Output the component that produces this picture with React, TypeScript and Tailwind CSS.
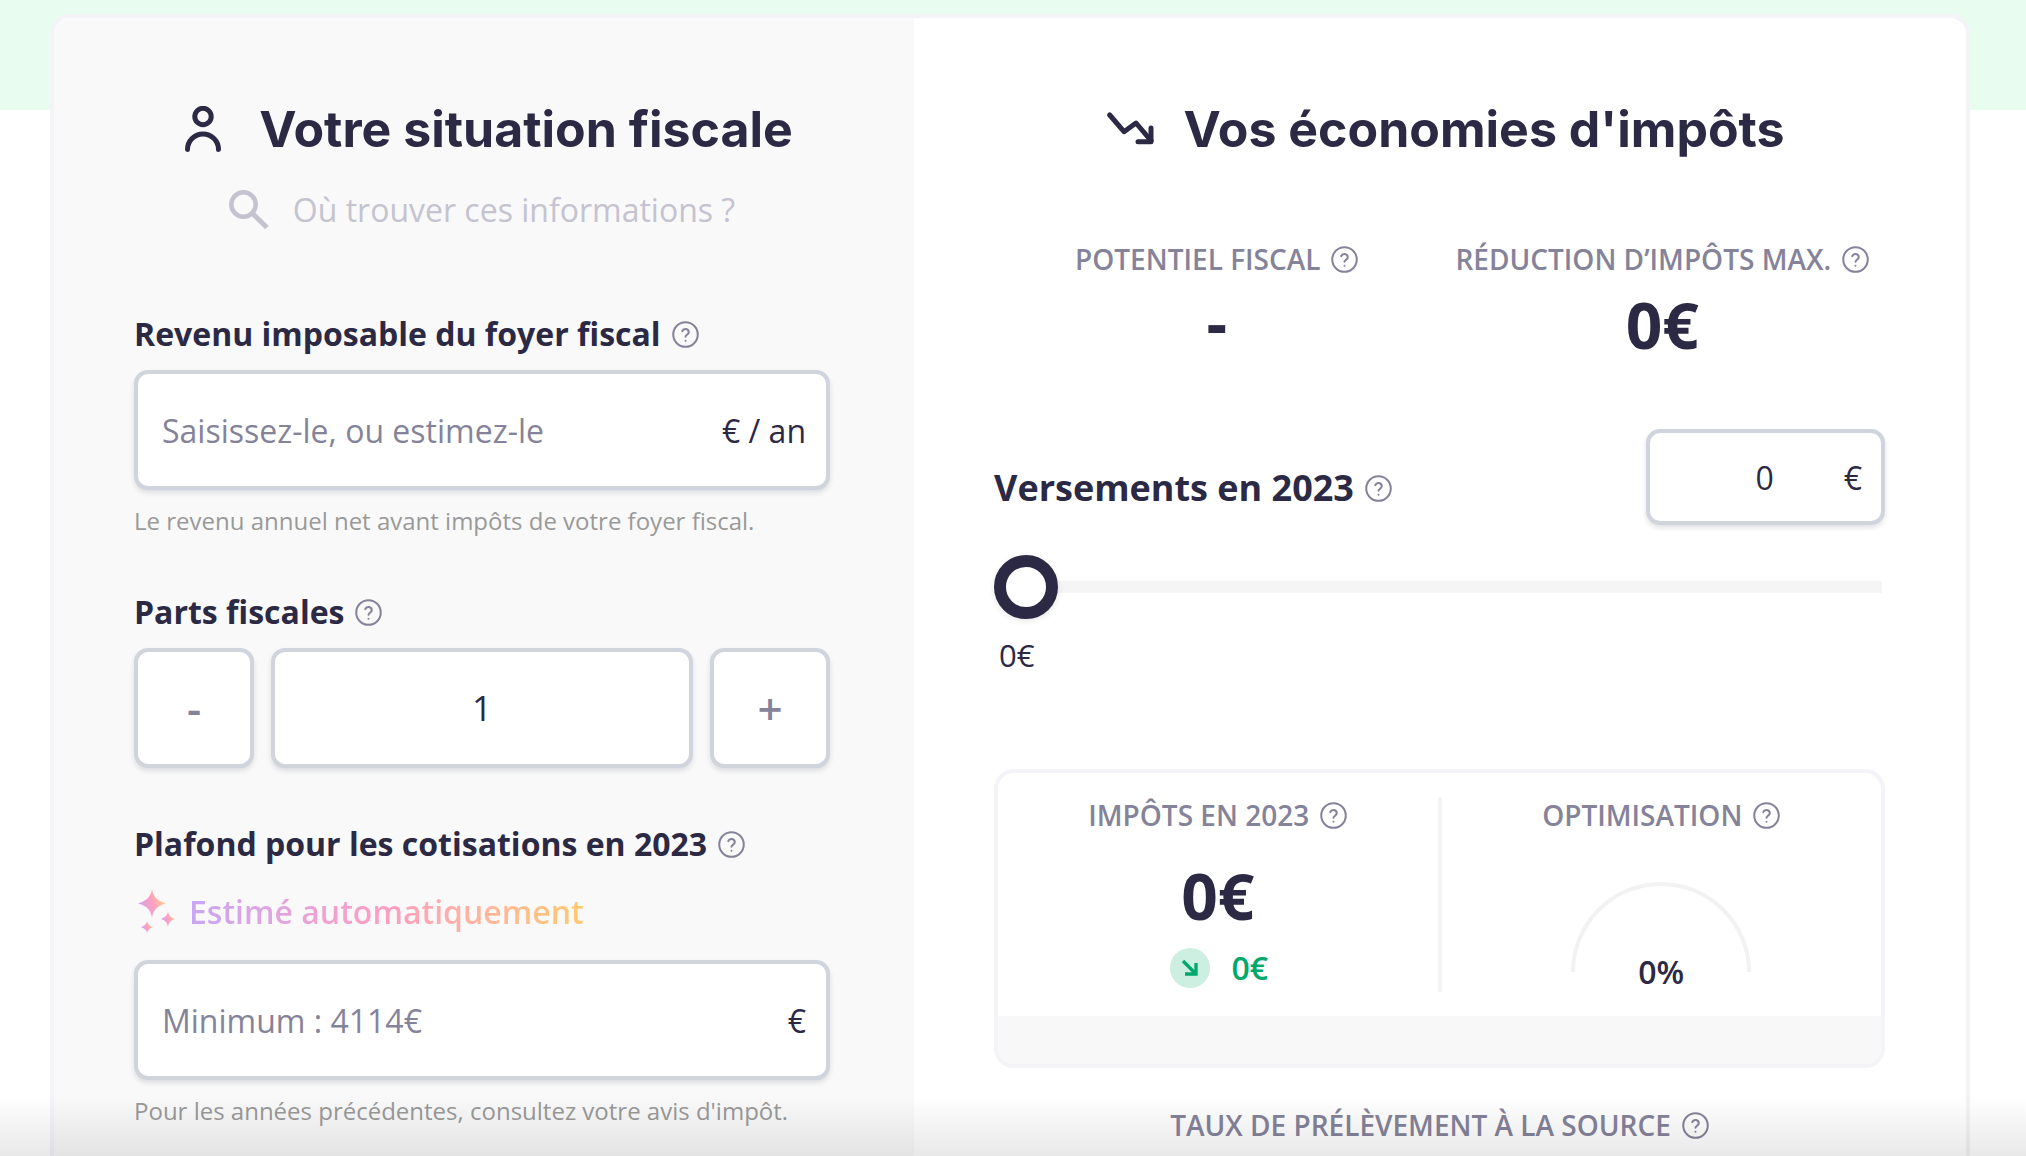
import React from 'react';

const Help = ({ className = '' }: { className?: string }) => (
  <svg viewBox="0 0 24 24" fill="none" stroke="#85839a" strokeWidth="1.8" strokeLinecap="round" strokeLinejoin="round" className={`w-[27px] h-[27px] shrink-0 ${className}`}>
    <circle cx="12" cy="12" r="10.9" />
    <path d="M9.1 9a3 3 0 0 1 5.8 1c0 2-2.9 2.4-2.9 4" />
    <path d="M12 17.6h.01" />
  </svg>
);

const Label = ({ children, className = '' }: { children: React.ReactNode; className?: string }) => (
  <div className={`flex items-center gap-[11px] leading-[42px] font-bold text-[#2c2945] ${className}`}>
    {children}
    <Help />
  </div>
);

const StatLabel = ({ children }: { children: React.ReactNode }) => (
  <div className="flex items-center justify-center gap-[11px] text-[28px] leading-[40px] font-semibold text-[#85839a]">
    {children}
    <Help />
  </div>
);

const boxClass =
  'bg-white border-4 border-[#d0d5dd] rounded-[14px] shadow-[0_3px_5px_rgba(16,24,40,0.12)]';

const App = () => {
  return (
    <div className="relative w-[2026px] h-[1156px] overflow-hidden bg-white font-['Open_Sans',sans-serif] text-[#2c2945]">
      <div className="h-[110px] bg-[#e8fdf0] absolute top-0 left-0 right-0" />

      <div className="relative ml-[50px] mt-[14px] w-[1920px] flex border-4 border-[#f3f3f8] rounded-[20px] overflow-hidden bg-white">
        {/* left panel */}
        <div className="w-[860px] shrink-0 bg-[#f9f9fa] pl-[80px] pr-[84px] pt-[85px] pb-[60px]">
          <div className="flex items-center justify-center gap-[38px] h-[52px] pl-[14px]">
            <svg viewBox="0 0 36 46" fill="none" stroke="#2c2945" strokeWidth="5" strokeLinecap="round" className="w-[36px] h-[46px] shrink-0">
              <circle cx="18" cy="10.5" r="8.2" />
              <path d="M2.5 43.5a15.5 15.5 0 0 1 31 0" />
            </svg>
            <h1 className="font-['Inter',sans-serif] text-[50px] leading-[52px] font-bold whitespace-nowrap">Votre situation fiscale</h1>
          </div>
          <div className="flex items-center justify-center gap-[24px] mt-[32px] h-[46px]">
            <svg viewBox="0 0 40 40" fill="none" stroke="#c4c3cf" strokeWidth="4.5" className="w-[40px] h-[40px] shrink-0">
              <circle cx="14.5" cy="14.5" r="12.2" />
              <path d="M23.5 23.5 38 37.5" strokeWidth="5" />
            </svg>
            <span className="text-[32px] text-[#c4c3cf] whitespace-nowrap">Où trouver ces informations ?</span>
          </div>

          <Label className="mt-[80px] text-[32px]">Revenu imposable du foyer fiscal</Label>
          <div className={`${boxClass} mt-[15px] h-[120px] flex items-center justify-between pl-[24px] pr-[20px] pt-[2px] text-[32px]`}>
            <span className="text-[#85839a]">Saisissez-le, ou estimez-le</span>
            <span>€ / an</span>
          </div>
          <p className="mt-[15px] text-[24px] leading-[32px] text-[#999999]">Le revenu annuel net avant impôts de votre foyer fiscal.</p>

          <Label className="mt-[54px] text-[32px]">Parts fiscales</Label>
          <div className="mt-[15px] flex gap-[17px] h-[120px] text-[35px]">
            <div className={`${boxClass} w-[120px] flex items-center justify-center text-[44px] text-[#85839a] font-semibold`}>-</div>
            <div className={`${boxClass} flex-1 flex items-center justify-center`}>1</div>
            <div className={`${boxClass} w-[120px] flex items-center justify-center text-[44px] text-[#85839a] font-semibold`}>+</div>
          </div>

          <Label className="mt-[55px] text-[32px]">Plafond pour les cotisations en 2023</Label>
          <div className="mt-[19px] flex items-center gap-[12px] h-[56px]">
            <svg viewBox="0 0 40 46" className="w-[40px] h-[46px] shrink-0 ml-[3px]">
              <defs>
                <linearGradient id="spark" x1="0" y1="0.6" x2="1" y2="0.3">
                  <stop offset="0" stopColor="#c9a6f5" />
                  <stop offset="0.5" stopColor="#ff9ec0" />
                  <stop offset="1" stopColor="#ffd68a" />
                </linearGradient>
              </defs>
              <path fill="url(#spark)" d="M15 0c1.200 7.500 4.800 11.500 14 14.500-9.200 2.500-12.800 6.500-14 14.500-1.200-8-4.800-12-14-14.500C10.200 11.500 13.800 7.500 15 0Z" />
              <path fill="url(#spark)" d="M31 22.500c.7 3.600 2.600 5.700 7 7.500-4.400 1.600-6.300 3.700-7 8-.7-4.300-2.600-6.400-7-8 4.400-1.800 6.300-3.900 7-7.500Z" />
              <path fill="url(#spark)" d="M10 32c.5 3 2 4.500 6 6.200-4 1.300-5.500 3-6 6.300-.5-3.300-2-5-6-6.300 4-1.700 5.500-3.200 6-6.200Z" />
            </svg>
            <span className="text-[32px] font-semibold text-transparent bg-clip-text bg-linear-to-r from-[#c9a6f5] via-[#ff9ec0] to-[#ffc96b] whitespace-nowrap">Estimé automatiquement</span>
          </div>
          <div className={`${boxClass} mt-[20px] h-[120px] flex items-center justify-between pl-[24px] pr-[20px] pt-[2px] text-[32px]`}>
            <span className="text-[#85839a]">Minimum : 4114€</span>
            <span>€</span>
          </div>
          <p className="mt-[15px] text-[24px] leading-[32px] text-[#999999]">Pour les années précédentes, consultez votre avis d'impôt.</p>
        </div>

        {/* right panel */}
        <div className="flex-1 pl-[80px] pr-[81px] pt-[85px]">
          <div className="flex items-center justify-center gap-[28px] h-[52px] pl-[13px]">
            <svg viewBox="0 0 48 34" fill="none" stroke="#2c2945" strokeWidth="5" strokeLinecap="round" strokeLinejoin="round" className="w-[48px] h-[34px] shrink-0">
              <path d="M2.700 3 17 19.700 29 11 44 28.700" />
              <path d="M44 16v13.700H31" />
            </svg>
            <h2 className="font-['Inter',sans-serif] text-[50px] leading-[52px] font-bold whitespace-nowrap">Vos économies d'impôts</h2>
          </div>

          <div className="grid grid-cols-2 mt-[84px]">
            <div className="flex flex-col items-center">
              <StatLabel>POTENTIEL FISCAL</StatLabel>
              <div className="text-[64px] leading-[88px] font-bold mt-[-1px]">-</div>
            </div>
            <div className="flex flex-col items-center">
              <StatLabel>RÉDUCTION D’IMPÔTS MAX.</StatLabel>
              <div className="text-[64px] leading-[88px] font-bold mt-[2px]">0€</div>
            </div>
          </div>

          <div className="flex items-start justify-between mt-[60px]">
            <Label className="mt-[38px] text-[36px]">Versements en 2023</Label>
            <div className={`${boxClass} w-[239px] h-[96px] flex items-center justify-end pt-[2px] pr-[19px] text-[32px]`}>
              <span className="mr-[70px]">0</span>
              <span>€</span>
            </div>
          </div>

          <div className="relative mt-[30px] h-[64px] flex items-center">
            <div className="w-[888px] h-[12px] bg-[#f5f5f5]" />
            <div className="absolute left-0 top-0 w-[64px] h-[64px] rounded-full bg-white border-[12px] border-[#2c2945] shadow-[0_2px_6px_rgba(0,0,0,0.1)]" />
          </div>
          <div className="mt-[16px] ml-[5px] text-[31px] leading-[40px]">0€</div>

          <div className="mt-[94px] h-[299px] border-4 border-[#f3f3f8] rounded-[20px] overflow-hidden flex flex-col">
            <div className="h-[243px] shrink-0 flex">
              <div className="flex-1 flex flex-col items-center pt-[22px]">
                <StatLabel>IMPÔTS EN 2023</StatLabel>
                <div className="text-[64px] leading-[80px] font-bold mt-[21px]">0€</div>
                <div className="flex items-center gap-[21px] mt-[8px] pl-[3px]">
                  <div className="w-[40px] h-[40px] rounded-full bg-[#ccefe2] flex items-center justify-center">
                    <svg viewBox="0 0 20 20" fill="none" stroke="#00a86b" strokeWidth="3.3" className="w-[20px] h-[20px]">
                      <path d="M3 3l13 13" />
                      <path d="M16 5v11H5" />
                    </svg>
                  </div>
                  <span className="text-[32px] font-semibold text-[#00a86b]">0€</span>
                </div>
              </div>
              <div className="w-[4px] h-[195px] mt-[24px] bg-[#f3f3f8]" />
              <div className="flex-1 flex flex-col items-center pt-[22px]">
                <StatLabel>OPTIMISATION</StatLabel>
                <div className="relative w-[180px] h-[90px] mt-[47px]">
                  <svg viewBox="0 0 180 90" fill="none" className="w-[180px] h-[90px]">
                    <path d="M2 90a88 88 0 0 1 176 0" stroke="#f2f2f2" strokeWidth="4" />
                  </svg>
                  <span className="absolute left-0 right-0 top-[69px] text-center text-[32px] leading-[42px] font-semibold">0%</span>
                </div>
              </div>
            </div>
            <div className="flex-1 bg-[#f8f8f8]" />
          </div>

          <div className="mt-[37px]">
            <StatLabel>TAUX DE PRÉLÈVEMENT À LA SOURCE</StatLabel>
          </div>
        </div>
      </div>

      {/* bottom fade */}
      <div className="absolute left-0 right-0 bottom-0 h-[60px] bg-linear-to-b from-transparent to-black/[0.09] pointer-events-none" />
    </div>
  );
};

export default App;
